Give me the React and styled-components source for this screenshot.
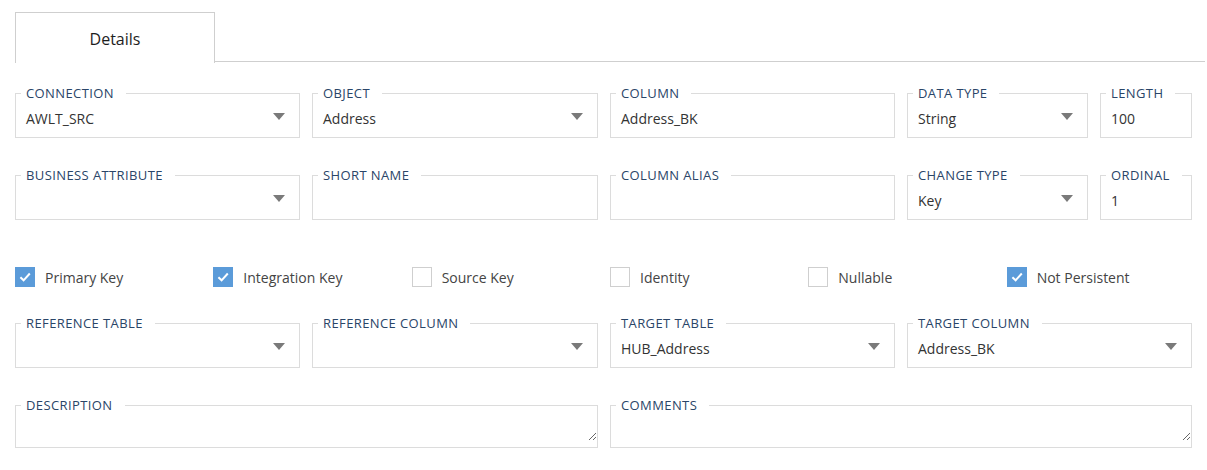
import React from "react"
import styled, { createGlobalStyle } from "styled-components"

const GlobalStyle = createGlobalStyle`
  body {
    margin: 0;
    background: #fff;
    font-family: "Open Sans", "Noto Sans", sans-serif;
  }
`

const Page = styled.div`
  width: 1190px;
  padding: 12px 2px 0 15px;
`

const TabBar = styled.div`
  display: flex;
  height: 49px;
  border-bottom: 1px solid #cfcfcf;
`

const Tab = styled.div`
  width: 198px;
  height: 49px;
  margin-bottom: -1px;
  padding-top: 1px;
  background: #fff;
  border: 1px solid #cfcfcf;
  border-bottom: none;
  display: flex;
  align-items: center;
  justify-content: center;
  font-size: 16px;
  font-weight: 500;
  color: #1e1e1e;
`

const FieldGrid = styled.div`
  display: grid;
  grid-template-columns: 285px 286px 285px 181px 92px;
  column-gap: 12px;
  row-gap: 30px;
  margin-top: ${({ $top }) => $top}px;
`

const Field = styled.fieldset`
  grid-column: span ${({ $span }) => $span || 1};
  margin: 0;
  padding: 0;
  min-width: 0;
  border: 1px solid #dcdcdc;
`

const Legend = styled.legend`
  margin-left: 5px;
  padding: 0 12px 0 5px;
  font-size: 13px;
  line-height: 14px;
  color: #2a4568;
  text-transform: uppercase;
  letter-spacing: 0.4px;
`

const Control = styled.div`
  display: flex;
  align-items: center;
  height: 37px;
  padding: 0 14px 0 10px;
  box-sizing: border-box;
`

const Value = styled.div`
  flex: 1;
  font-size: 14px;
  line-height: 20px;
  color: #333;
  white-space: nowrap;
`

const Caret = styled.span`
  width: 0;
  height: 0;
  margin-bottom: 5px;
  border-left: 6.5px solid transparent;
  border-right: 6.5px solid transparent;
  border-top: 7px solid #7a7a7a;
`

const TextArea = styled.textarea`
  display: block;
  width: 100%;
  height: 29px;
  margin: 0 0 6px;
  padding: 0 10px;
  box-sizing: border-box;
  border: none;
  outline: none;
  resize: vertical;
  font-family: inherit;
  font-size: 14px;
  background: transparent;
`

const CheckRow = styled.div`
  display: grid;
  grid-template-columns: repeat(6, 1fr);
  margin-top: 47px;
`

const CheckItem = styled.label`
  display: flex;
  align-items: center;
  gap: 10px;
  font-size: 14px;
  color: #444;
  height: 20px;
`

const Box = styled.span`
  width: 20px;
  height: 20px;
  box-sizing: border-box;
  display: flex;
  align-items: center;
  justify-content: center;
  background: ${({ $checked }) => ($checked ? "#5b9bd9" : "#fff")};
  border: 1px solid ${({ $checked }) => ($checked ? "#5b9bd9" : "#cfcfcf")};
`

const SelectField = ({ label, value, span }) => (
  <Field $span={span}>
    <Legend>{label}</Legend>
    <Control>
      <Value>{value}</Value>
      <Caret />
    </Control>
  </Field>
)

const TextField = ({ label, value, span }) => (
  <Field $span={span}>
    <Legend>{label}</Legend>
    <Control>
      <Value>{value}</Value>
    </Control>
  </Field>
)

const AreaField = ({ label, span }) => (
  <Field $span={span}>
    <Legend>{label}</Legend>
    <TextArea />
  </Field>
)

const Check = ({ label, checked }) => (
  <CheckItem>
    <Box $checked={checked}>
      {checked && (
        <svg width="14" height="14" viewBox="0 0 14 14">
          <path d="M2.4 7.2 L5.6 10.3 L11.8 3.5" fill="none" stroke="#fff" strokeWidth="2" />
        </svg>
      )}
    </Box>
    {label}
  </CheckItem>
)

const App = () => {
  return (
    <Page>
      <GlobalStyle />
      <TabBar>
        <Tab>Details</Tab>
      </TabBar>
      <FieldGrid $top={24}>
        <SelectField label="Connection" value="AWLT_SRC" />
        <SelectField label="Object" value="Address" />
        <TextField label="Column" value="Address_BK" />
        <SelectField label="Data Type" value="String" />
        <TextField label="Length" value="100" />
        <SelectField label="Business Attribute" value="" />
        <TextField label="Short Name" value="" />
        <TextField label="Column Alias" value="" />
        <SelectField label="Change Type" value="Key" />
        <TextField label="Ordinal" value="1" />
      </FieldGrid>
      <CheckRow>
        <Check label="Primary Key" checked />
        <Check label="Integration Key" checked />
        <Check label="Source Key" />
        <Check label="Identity" />
        <Check label="Nullable" />
        <Check label="Not Persistent" checked />
      </CheckRow>
      <FieldGrid $top={29}>
        <SelectField label="Reference Table" value="" />
        <SelectField label="Reference Column" value="" />
        <SelectField label="Target Table" value="HUB_Address" />
        <SelectField label="Target Column" value="Address_BK" span={2} />
        <AreaField label="Description" span={2} />
        <AreaField label="Comments" span={3} />
      </FieldGrid>
    </Page>
  )
}

export default App
